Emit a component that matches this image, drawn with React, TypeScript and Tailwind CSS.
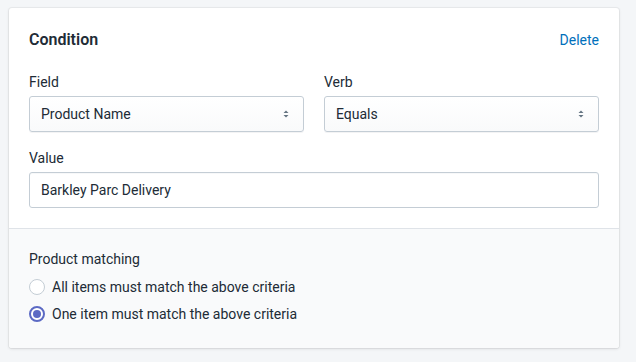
import React from 'react';

function SelectArrows() {
  return (
    <svg width="8" height="10" viewBox="0 0 8 10" className="shrink-0">
      <path d="M1.5 4 L4 1.5 L6.5 4 Z" fill="#637381" />
      <path d="M1.5 6 L4 8.5 L6.5 6 Z" fill="#637381" />
    </svg>
  );
}

function SelectField({ label, value }: { label: string; value: string }) {
  return (
    <div className="flex flex-col gap-1">
      <div className="text-sm leading-5 text-[#212b36]">{label}</div>
      <div className="flex h-9 items-center justify-between rounded-[3px] border border-[#c4cdd5] bg-gradient-to-b from-white to-[#f9fafb] pl-[11px] pr-[13px] text-sm text-[#212b36] shadow-[0_1px_0_rgba(22,29,37,0.05)]">
        <span>{value}</span>
        <SelectArrows />
      </div>
    </div>
  );
}

function Radio({ label, checked }: { label: string; checked?: boolean }) {
  return (
    <label className="flex h-[27px] items-center gap-[7px] text-sm text-[#212b36]">
      <span
        className={
          checked
            ? 'flex h-4 w-4 items-center justify-center rounded-full border-2 border-[#5c6ac4] bg-white'
            : 'flex h-4 w-4 items-center justify-center rounded-full border border-[#c4cdd5] bg-white'
        }
      >
        {checked && <span className="h-2 w-2 rounded-full bg-[#5c6ac4]" />}
      </span>
      {label}
    </label>
  );
}

export default function App() {
  return (
    <div className="min-h-[362px] bg-[#f4f6f8] pl-[9px] pr-4 pt-2 font-['Roboto',sans-serif]">
      <div className="w-[610px] overflow-hidden rounded-[3px] bg-white shadow-[0_0_0_1px_rgba(63,63,68,0.05),0_1px_3px_0_rgba(63,63,68,0.15)]">
        <div className="px-5 pb-5 pt-5">
          <div className="flex h-6 items-center justify-between">
            <h2 className="text-base font-semibold text-[#212b36]">Condition</h2>
            <button className="text-sm text-[#006fbb]">Delete</button>
          </div>
          <div className="mt-5 grid grid-cols-2 gap-5">
            <SelectField label="Field" value="Product Name" />
            <SelectField label="Verb" value="Equals" />
          </div>
          <div className="mt-4 flex flex-col gap-1">
            <div className="text-sm leading-5 text-[#212b36]">Value</div>
            <div className="flex h-9 items-center rounded-[3px] border border-[#c4cdd5] bg-white px-[11px] text-sm text-[#212b36] shadow-[inset_0_1px_0_0_rgba(99,115,129,0.05)]">
              Barkley Parc Delivery
            </div>
          </div>
        </div>
        <div className="border-t border-[#dfe3e8] bg-[#f9fafb] px-5 pb-[21px] pt-5">
          <div className="mb-1 text-sm leading-5 text-[#212b36]">Product matching</div>
          <Radio label="All items must match the above criteria" />
          <Radio label="One item must match the above criteria" checked />
        </div>
      </div>
    </div>
  );
}
